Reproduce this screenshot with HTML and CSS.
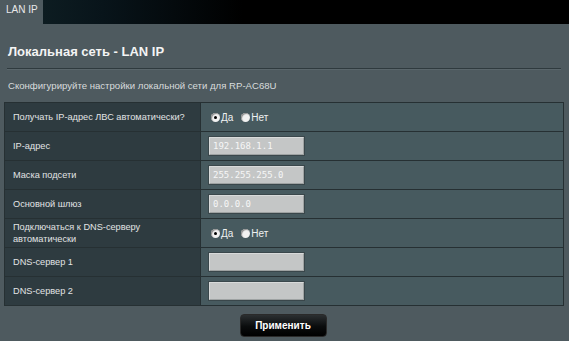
FILE: index.html
```html
<!DOCTYPE html>
<html lang="ru">
<head>
<meta charset="utf-8">
<title>LAN IP</title>
<link rel="stylesheet" href="styles.css">
</head>
<body>
<div class="topbar">
  <div class="tab">LAN IP</div>
  <div class="topfill"></div>
</div>
<div class="content">
  <h1 class="title">Локальная сеть - LAN IP</h1>
  <div class="sep"></div>
  <p class="subtitle">Сконфигурируйте настройки локальной сети для RP-AC68U</p>
  <table class="form">
    <tr>
      <th>Получать IP-адрес ЛВС автоматически?</th>
      <td><span class="radio on"></span><span class="rl">Да</span><span class="radio"></span><span class="rl">Нет</span></td>
    </tr>
    <tr>
      <th>IP-адрес</th>
      <td><div class="field">192.168.1.1</div></td>
    </tr>
    <tr>
      <th>Маска подсети</th>
      <td><div class="field">255.255.255.0</div></td>
    </tr>
    <tr>
      <th>Основной шлюз</th>
      <td><div class="field">0.0.0.0</div></td>
    </tr>
    <tr>
      <th class="two">Подключаться к DNS-серверу<br>автоматически</th>
      <td><span class="radio on"></span><span class="rl">Да</span><span class="radio"></span><span class="rl">Нет</span></td>
    </tr>
    <tr>
      <th>DNS-сервер 1</th>
      <td><div class="field"></div></td>
    </tr>
    <tr>
      <th>DNS-сервер 2</th>
      <td><div class="field"></div></td>
    </tr>
  </table>
  <div class="actions"><button class="apply">Применить</button></div>
</div>
</body>
</html>
```
FILE: styles.css
```css
html, body {
  margin: 0;
  padding: 0;
}
body {
  background: #4e5a5f;
  font-family: "Liberation Sans", Arial, sans-serif;
  color: #e6e6e6;
  width: 569px;
  height: 341px;
  overflow: hidden;
}
.topbar {
  display: flex;
  height: 24px;
  background: #000;
}
.tab {
  width: 43px;
  background: #4e5a5f;
  color: #e8e8e8;
  font-size: 10px;
  line-height: 20px;
  padding-left: 6px;
  box-sizing: border-box;
}
.topfill {
  flex: 1;
  background: linear-gradient(90deg, #0d1c21 0px, #08141a 60px, #000 200px);
}
.content {
  padding: 0 5px 0 4px;
}
.title {
  margin: 20px 0 0 4px;
  font-size: 13px;
  font-weight: bold;
  color: #f4f4f4;
  line-height: 16px;
}
.sep {
  height: 1px;
  background: #2f3a3e;
  margin: 8px 3px 0 3px;
  box-shadow: 0 1px 0 #5a666b;
}
.subtitle {
  margin: 10px 0 0 4px;
  font-size: 9.6px;
  line-height: 14px;
  color: #d8dcdd;
}
.form {
  margin-top: 9px;
  width: 560px;
  border-collapse: collapse;
  border: 1px solid #263033;
}
.form th, .form td {
  height: 28px;
  padding: 0;
  border: 1px solid #263033;
  font-size: 9.2px;
  font-weight: normal;
  text-align: left;
}
.form th {
  width: 187px;
  background: #2e3b40;
  color: #e2e4e5;
  padding-left: 8px;
  line-height: 12px;
}
.form td {
  background: #475a5f;
  padding-left: 8px;
}
.radio {
  display: inline-block;
  width: 9px;
  height: 9px;
  border-radius: 50%;
  background: #f2f2f2;
  box-shadow: inset 1px 1px 1px #8a8a8a;
  vertical-align: -1px;
  margin-left: 2px;
  position: relative;
}
.radio.on::after {
  content: "";
  position: absolute;
  left: 3px;
  top: 3px;
  width: 3px;
  height: 3px;
  border-radius: 50%;
  background: #000;
}
.rl {
  font-size: 10px;
  color: #eef0f0;
  margin-left: 1px;
  margin-right: 6px;
}
.field {
  width: 90px;
  height: 16px;
  background: #c4c6c6;
  border: 1px solid #9ea2a2;
  border-top-color: #d8dada;
  border-left-color: #d8dada;
  box-shadow: 0 0 0 1px #3a474b;
  font-family: "DejaVu Sans Mono", "Liberation Mono", monospace;
  font-size: 9px;
  line-height: 16px;
  color: #f6f6f6;
  padding-left: 3px;
}
.actions {
  display: flex;
  justify-content: center;
  margin-top: 8px;
}
.apply {
  width: 87px;
  height: 23px;
  border: 1px solid #2a2a2a;
  border-radius: 4px;
  background: linear-gradient(180deg, #2b2f31 0%, #0a0c0d 55%, #000 100%);
  color: #fff;
  font-family: "Liberation Sans", Arial, sans-serif;
  font-weight: bold;
  font-size: 10px;
  padding: 0;
  margin-left: -2px;
}
```
